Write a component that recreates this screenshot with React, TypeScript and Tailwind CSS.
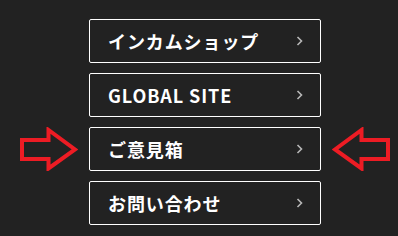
import React from 'react';

const links = ['インカムショップ', 'GLOBAL SITE', 'ご意見箱', 'お問い合わせ'];

function Chevron() {
  return (
    <svg width="7" height="10" viewBox="0 0 7 10" className="shrink-0">
      <polyline points="1.5,1 5.5,5 1.5,9" fill="none" stroke="#b8b8b8" strokeWidth="1.6" />
    </svg>
  );
}

// outlined red arrow, pointing right unless flipped
function Arrow({ flip }: { flip?: boolean }) {
  return (
    <svg width="58" height="44" viewBox="0 0 58 44" className={flip ? '-scale-x-100' : ''}>
      <polygon
        points="2,13 28.5,13 28.5,3 55,22.5 28.5,41.5 28.5,32 2,32"
        fill="none"
        stroke="#ed1c24"
        strokeWidth="4"
        strokeLinejoin="miter"
      />
    </svg>
  );
}

export default function App() {
  return (
    <div
      className="w-[398px] h-[236px] bg-[#222222] pt-[19px] pl-[20px]"
      style={{ fontFamily: '"Noto Sans CJK JP", "Noto Sans", sans-serif' }}
    >
      <div className="grid grid-cols-[58px_232px_58px] grid-rows-[44px_44px_44px_44px] gap-x-[11px] gap-y-[10px]">
        {links.map((label, i) => (
          <a
            key={label}
            href="#"
            className="col-start-2 flex items-center justify-between border border-white rounded-[2px] pl-[18px] pr-[17px] text-white font-bold text-[18px] tracking-[0.05em]"
            style={{ gridRowStart: i + 1 }}
          >
            <span>{label}</span>
            <Chevron />
          </a>
        ))}
        <div className="col-start-1 row-start-3 flex items-center">
          <Arrow />
        </div>
        <div className="col-start-3 row-start-3 flex items-center">
          <Arrow flip />
        </div>
      </div>
    </div>
  );
}
